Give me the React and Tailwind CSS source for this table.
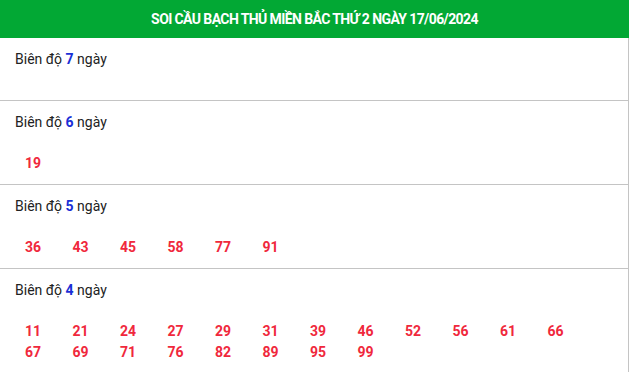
const rows = [
  { days: 7, nums: [] },
  { days: 6, nums: ["19"] },
  { days: 5, nums: ["36", "43", "45", "58", "77", "91"] },
  {
    days: 4,
    nums: [
      "11", "21", "24", "27", "29", "31", "39", "46", "52", "56", "61", "66",
      "67", "69", "71", "76", "82", "89", "95", "99",
    ],
  },
];

export default function App() {
  return (
    <div className="w-[629px] bg-white font-['Roboto',sans-serif] text-[14px] text-[#222]">
      <div className="h-[38px] bg-[#02a834] flex items-center justify-center">
        <h2 className="text-white font-bold text-[14px] tracking-[-0.6px]">
          SOI CẦU BẠCH THỦ MIỀN BẮC THỨ 2 NGÀY 17/06/2024
        </h2>
      </div>
      <div className="border-r border-[#c4c4c4]">
        {rows.map((row) => (
          <div key={row.days} className="border-b border-[#c4c4c4] pt-[11px] pb-[10px] px-[15px]">
            <p className="leading-[21px]">
              Biên độ <span className="font-bold text-[#1a2fd6]">{row.days}</span> ngày
            </p>
            <div className="mt-[20px] pl-[10px] grid grid-cols-[repeat(12,47.5px)]">
              {row.nums.map((n) => (
                <span key={n} className="leading-[21px] font-bold text-[#f0283c]">
                  {n}
                </span>
              ))}
            </div>
          </div>
        ))}
      </div>
    </div>
  );
}
